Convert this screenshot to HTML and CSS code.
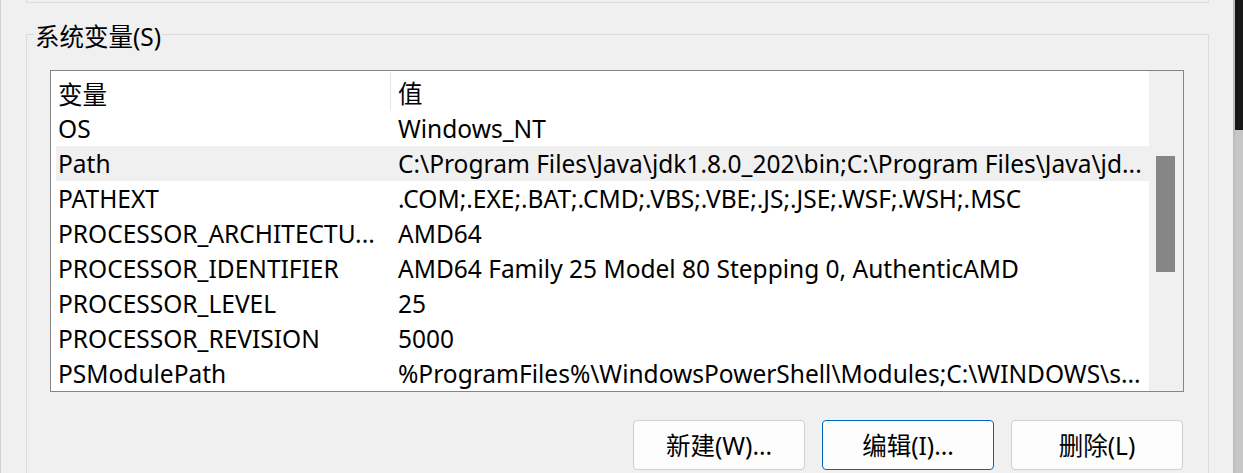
FILE: index.html
```html
<!DOCTYPE html>
<html lang="zh-CN">
<head>
<meta charset="utf-8">
<title>系统变量</title>
<link rel="stylesheet" href="styles.css">
</head>
<body>
<div class="window">
  <div class="content">
    <div class="top-group"></div>
    <div class="group">
      <div class="group-title">系统变量(S)</div>
      <div class="listbox">
        <div class="list">
          <div class="row header">
            <div class="cell name">变量</div>
            <div class="cell value">值</div>
          </div>
          <div class="row"><div class="cell name">OS</div><div class="cell value">Windows_NT</div></div>
          <div class="row selected"><div class="cell name">Path</div><div class="cell value">C:\Program Files\Java\jdk1.8.0_202\bin;C:\Program Files\Java\jd...</div></div>
          <div class="row"><div class="cell name">PATHEXT</div><div class="cell value">.COM;.EXE;.BAT;.CMD;.VBS;.VBE;.JS;.JSE;.WSF;.WSH;.MSC</div></div>
          <div class="row"><div class="cell name">PROCESSOR_ARCHITECTU...</div><div class="cell value">AMD64</div></div>
          <div class="row"><div class="cell name">PROCESSOR_IDENTIFIER</div><div class="cell value">AMD64 Family 25 Model 80 Stepping 0, AuthenticAMD</div></div>
          <div class="row"><div class="cell name">PROCESSOR_LEVEL</div><div class="cell value">25</div></div>
          <div class="row"><div class="cell name">PROCESSOR_REVISION</div><div class="cell value">5000</div></div>
          <div class="row"><div class="cell name">PSModulePath</div><div class="cell value">%ProgramFiles%\WindowsPowerShell\Modules;C:\WINDOWS\s...</div></div>
        </div>
        <div class="scrollbar"><div class="thumb"></div></div>
      </div>
      <div class="buttons">
        <button class="btn">新建(W)...</button>
        <button class="btn focused">编辑(I)...</button>
        <button class="btn">删除(L)</button>
      </div>
    </div>
  </div>
  <div class="edge">
    <div class="edge-dark"></div>
    <div class="edge-light"></div>
  </div>
</div>
</body>
</html>
```

FILE: styles.css
```css
html, body {
  margin: 0;
  padding: 0;
}
body {
  width: 1243px;
  height: 473px;
  overflow: hidden;
  background: #f0f0f0;
  font-family: "Noto Sans", "Noto Sans CJK SC", sans-serif;
  font-size: 24.5px;
  color: #000;
}
.window {
  display: flex;
  height: 473px;
}
.content {
  flex: 1;
  border-left: 1px solid #d2d2d2;
  display: flex;
  flex-direction: column;
}
.top-group {
  margin-left: 25px;
  width: 1181px;
  height: 2px;
  border: 1px solid #dcdcdc;
  border-top: none;
}
.group {
  margin-left: 25px;
  margin-top: 31px;
  flex: 1;
  border: 1px solid #dcdcdc;
  border-bottom: none;
  padding: 0 23px 0 23px;
  box-sizing: border-box;
  width: 1183px;
}
.group-title {
  width: fit-content;
  margin: -13px 0 0 -16px;
  padding: 0 1px;
  background: #f0f0f0;
  line-height: 30px;
  height: 30px;
}
.listbox {
  margin-top: 18px;
  width: 1134px;
  height: 322px;
  box-sizing: border-box;
  border: 1px solid #858585;
  background: #fff;
  display: flex;
  overflow: hidden;
}
.list {
  width: 1098px;
  display: flex;
  flex-direction: column;
}
.row {
  display: flex;
  height: 35px;
  align-items: center;
  flex-shrink: 0;
}
.row.header {
  height: 40px;
  align-items: stretch;
}
.row.header .cell {
  display: flex;
  align-items: center;
  padding-top: 3px;
  box-sizing: border-box;
}
.row.header .name {
  border-right: 1px solid #e5e5e5;
  margin: 1px 0 0 0;
}
.row.selected {
  background: #f0f0f0;
  margin-left: 5px;
}
.row.selected .name {
  width: 335px;
  padding-left: 2px;
}
.cell {
  white-space: nowrap;
  overflow: hidden;
}
.name {
  width: 340px;
  box-sizing: border-box;
  padding-left: 7px;
}
.value {
  flex: 1;
  padding-left: 7px;
}
.scrollbar {
  width: 34px;
  background: #f0f0f0;
  padding-left: 7px;
  box-sizing: border-box;
}
.thumb {
  margin-top: 85px;
  width: 19px;
  height: 116px;
  background: #868686;
}
.buttons {
  width: 1133px;
  margin-top: 28px;
  display: flex;
  justify-content: flex-end;
  gap: 17px;
}
.btn {
  width: 172px;
  height: 50px;
  box-sizing: border-box;
  background: #fdfdfd;
  border: 1px solid #d0d0d0;
  border-radius: 4px;
  font-family: "Noto Sans", "Noto Sans CJK SC", sans-serif;
  font-size: 24.5px;
  color: #000;
  padding: 0 0 2px 0;
}
.btn.focused {
  border-color: #0067c0;
}
.edge {
  width: 10px;
  display: flex;
  flex-direction: column;
  border-left: 2px solid #bdbdbd;
  box-sizing: border-box;
}
.edge-dark {
  height: 130px;
  background: #171717;
}
.edge-light {
  flex: 1;
  background: #c6c6c6;
}
```
